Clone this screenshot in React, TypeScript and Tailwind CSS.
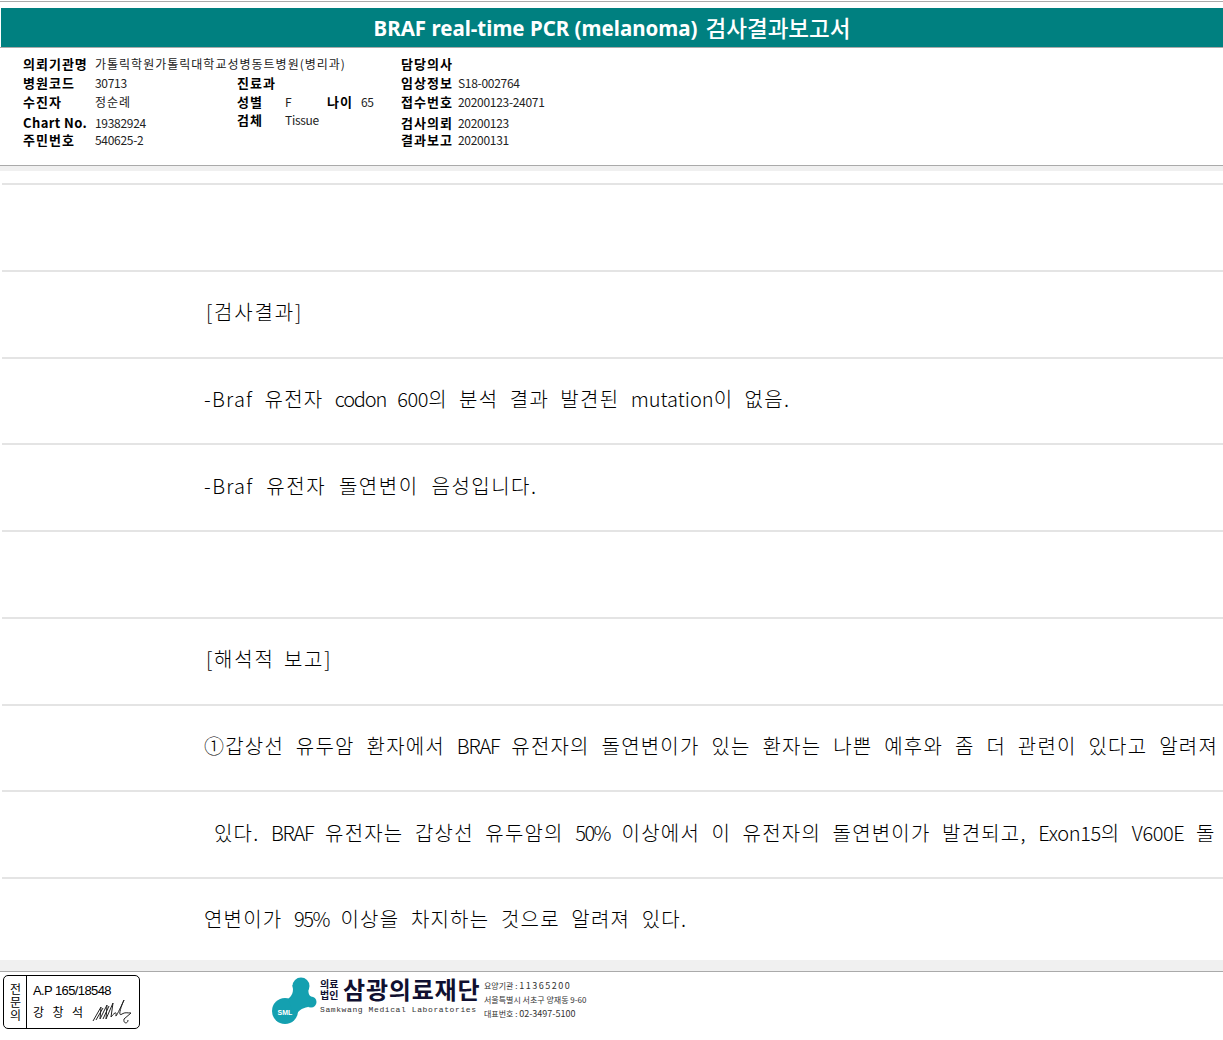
const body = '[font-family:"Noto_Sans_CJK_KR","Noto_Sans",sans-serif]'

const rows = [
  { text: '', cls: 'pl-[202px]' },
  { text: '[검사결과]', cls: 'pl-[204px] tracking-[1.8px]' },
  { text: '-Braf 유전자 codon 600의 분석 결과 발견된 mutation이 없음.', cls: 'pl-[202px] tracking-[1.3px] [word-spacing:5.5px]' },
  { text: '-Braf 유전자 돌연변이 음성입니다.', cls: 'pl-[202px] tracking-[1.5px] [word-spacing:7px]' },
  { text: '', cls: 'pl-[202px]' },
  { text: '[해석적 보고]', cls: 'pl-[204px] tracking-[1.8px] [word-spacing:3px]' },
  {
    text: '①갑상선 유두암 환자에서 BRAF 유전자의 돌연변이가 있는 환자는 나쁜 예후와 좀 더 관련이 있다고 알려져',
    cls: 'pl-[202px] tracking-[1.2px] [word-spacing:6.25px]',
  },
  {
    text: '있다. BRAF 유전자는 갑상선 유두암의 50% 이상에서 이 유전자의 돌연변이가 발견되고, Exon15의 V600E 돌',
    cls: 'pl-[212px] tracking-[1.2px] [word-spacing:5.9px]',
  },
  { text: '연변이가 95% 이상을 차지하는 것으로 알려져 있다.', cls: 'pl-[202px] tracking-[1.2px] [word-spacing:6px]' },
]

// latin runs sit tighter than the hangul in the report body
const latinClass = (word: string) => {
  if (word === 'Braf') return 'tracking-[1.2px]'
  if (word === 'codon' || word === 'BRAF') return 'tracking-[-1.2px]'
  if (word === '50%' || word === '95%') return 'tracking-[-1.5px]'
  if (word === 'mutation') return 'tracking-[0px]'
  return 'tracking-[-0.4px]'
}

const RowText = ({ text }: { text: string }) => (
  <>
    {text.split(/([A-Za-z0-9%]+)/).map((part, i) =>
      i % 2 === 1 ? (
        <span key={i} className={latinClass(part)}>
          {part}
        </span>
      ) : (
        part
      ),
    )}
  </>
)

const Label = ({ children }: { children: string }) => (
  <span className={`font-bold text-[13px] text-black whitespace-nowrap ${children === 'Chart No.' ? 'tracking-[0.4px]' : 'tracking-[1px]'}`}>
    {children}
  </span>
)

const Value = ({ children }: { children: string }) => (
  <span
    className={`text-[12px] text-[#222] whitespace-nowrap ${/[가-힣]/.test(children) ? 'tracking-[1px]' : 'tracking-[-0.3px]'}`}
  >
    {children}
  </span>
)

const Info = ({ label, value, w, h }: { label: string; value?: string; w: string; h: string }) => (
  <div className={`flex items-baseline ${h}`}>
    <div className={`${w} shrink-0`}>
      <Label>{label}</Label>
    </div>
    {value ? <Value>{value}</Value> : null}
  </div>
)

const Logo = () => (
  <svg width="52" height="50" viewBox="0 0 52 50" className="shrink-0">
    <g fill="#14a0b0">
      <circle cx="15" cy="35" r="13" />
      <circle cx="31" cy="10" r="8.5" />
      <circle cx="41" cy="26" r="5.5" />
      <path d="M22.5 9 C24 16 22 20 18 23 L25 42 C27 35 32 32 38 31 L41 20.5 C38 19 38 14 39 9 Z" />
    </g>
    <text x="15" y="39" textAnchor="middle" fontSize="7" fontWeight="700" fill="#fff" fontFamily="Liberation Sans">
      SML
    </text>
  </svg>
)

export default function App() {
  return (
    <div className={`w-[1223px] h-[1040px] bg-white overflow-hidden ${body}`}>
      <div className="h-[7px] mt-px border-t border-[#aaa]" />
      <div className="ml-px h-[39px] pt-[2px] bg-[#008080] flex items-center justify-center gap-[8px] text-white font-bold [font-family:'Noto_Sans','Noto_Sans_CJK_KR',sans-serif]">
        <span className="text-[20.5px]">BRAF real-time PCR (melanoma)</span>
        <span className="text-[22.5px] font-medium">검사결과보고서</span>
      </div>

      <div className="h-[119px] border-t border-b border-[#aaa] flex pl-[23px] pt-[2px]">
        <div className="w-[214px] shrink-0">
          <Info label="의뢰기관명" value="가톨릭학원가톨릭대학교성병동트병원(병리과)" w="w-[72px]" h="h-[19px]" />
          <Info label="병원코드" value="30713" w="w-[72px]" h="h-[19px]" />
          <Info label="수진자" value="정순례" w="w-[72px]" h="h-[21px]" />
          <Info label="Chart No." value="19382924" w="w-[72px]" h="h-[17px]" />
          <Info label="주민번호" value="540625-2" w="w-[72px]" h="h-[17px]" />
        </div>
        <div className="w-[164px] shrink-0 pt-[19px]">
          <Info label="진료과" w="w-[48px]" h="h-[19px]" />
          <div className="flex items-baseline h-[18px]">
            <div className="w-[48px]">
              <Label>성별</Label>
            </div>
            <div className="w-[42px]">
              <Value>F</Value>
            </div>
            <div className="w-[34px]">
              <Label>나이</Label>
            </div>
            <Value>65</Value>
          </div>
          <Info label="검체" value="Tissue" w="w-[48px]" h="h-[18px]" />
        </div>
        <div>
          <Info label="담당의사" w="w-[57px]" h="h-[19px]" />
          <Info label="임상정보" value="S18-002764" w="w-[57px]" h="h-[19px]" />
          <Info label="접수번호" value="20200123-24071" w="w-[57px]" h="h-[21px]" />
          <Info label="검사의뢰" value="20200123" w="w-[57px]" h="h-[17px]" />
          <Info label="결과보고" value="20200131" w="w-[57px]" h="h-[17px]" />
        </div>
      </div>

      <div className="h-[5px] bg-[#f0f0f0]" />

      <div className="h-[789px] pl-[2px] pt-[12px] overflow-hidden">
        {rows.map((row, i) => (
          <div
            key={i}
            className={`h-[86.75px] border-t-2 border-[#e4e4e4] pb-[4px] flex items-center whitespace-pre text-[20px] font-light text-black ${row.cls}`}
          >
            <div>
              <RowText text={row.text} />
            </div>
          </div>
        ))}
      </div>

      <div className="h-[11px] bg-[#f0f0f0] border-b border-[#aaa] box-content" />

      <div className="flex items-start pt-[3px] pl-[3px]">
        <div className="w-[137px] h-[54px] border border-black rounded-[5px] flex shrink-0">
          <div className="w-[23px] border-r border-black flex items-center justify-center">
            <span className="[writing-mode:vertical-rl] [text-orientation:upright] text-[12px] tracking-[1px] leading-none">
              전문의
            </span>
          </div>
          <div className="pl-[6px] pt-[6px]">
            <div className="text-[13px] leading-[18px] tracking-[-0.6px] [font-family:'Liberation_Sans',sans-serif]">
              A.P 165/18548
            </div>
            <div className="flex items-center -mt-[1px]">
              <span className="text-[12px] tracking-[8.5px]">강창석</span>
              <svg width="42" height="26" viewBox="0 0 42 26">
                <path
                  d="M1 22 L9 8 L8 20 L15 6 L14 20 L21 4 L19 18 C22 14 25 12 24 16 C23 20 27 12 32 1 C28 10 26 18 30 15 C33 13 35 14 39 14 L32 20 C31 25 36 25 36 21 M4 21 L11 9 M11 20 L17 7"
                  fill="none"
                  stroke="#222"
                  strokeWidth="1"
                />
              </svg>
            </div>
          </div>
        </div>

        <div className="ml-[130px] mt-[1px] flex">
          <Logo />
          <div className="ml-[-2px] w-[161px] shrink-0">
            <div className="flex items-center h-[26px]">
              <div className="text-[10px] leading-[11px] font-bold text-[#101030] w-[23px] pr-[3px] shrink-0">
                의료 법인
              </div>
              <div className="text-[24px] font-bold tracking-[0.8px] text-[#101030] leading-[26px] whitespace-nowrap">
                삼광의료재단
              </div>
            </div>
            <div className="text-[8px] tracking-[0.6px] mt-[2px] text-[#333] whitespace-nowrap [font-family:'Liberation_Mono',monospace]">
              Samkwang Medical Laboratories
            </div>
          </div>
          <div className="ml-[3px] text-[8px] leading-[14px] text-[#333] pt-[3px] whitespace-nowrap">
            <div>
              요양기관 : <span className="tracking-[1.5px] text-[9px]">11365200</span>
            </div>
            <div>서울특별시 서초구 양재동 9-60</div>
            <div>
              대표번호 : <span className="text-[9px]">02-3497-5100</span>
            </div>
          </div>
        </div>
      </div>
    </div>
  )
}
